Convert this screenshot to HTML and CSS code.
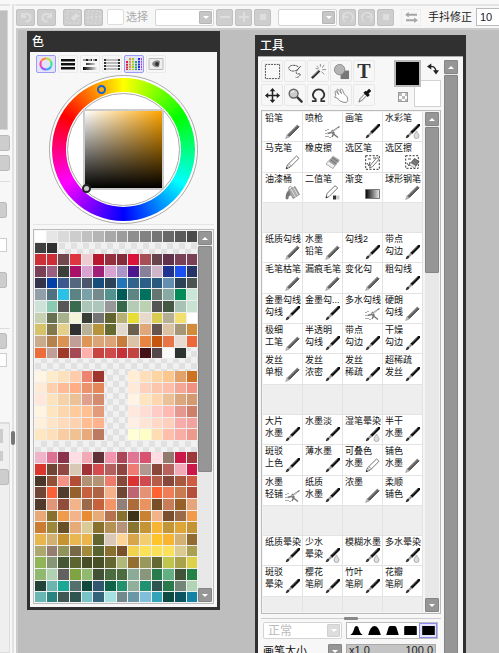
FILE: index.html
```html
<!DOCTYPE html>
<html lang="zh-CN">
<head>
<meta charset="utf-8">
<title>绘图</title>
<link rel="stylesheet" href="styles.css">
</head>
<body>
<svg class="defs" aria-hidden="true">
  <defs>
    <linearGradient id="fade"><stop offset="0" stop-color="#000"/><stop offset="1" stop-color="#eee"/></linearGradient>
    <linearGradient id="metal" x1="0" y1="0" x2="1" y2="1"><stop offset=".3" stop-color="#bbb"/><stop offset=".6" stop-color="#444"/></linearGradient>
    <symbol id="pencil" viewBox="0 0 15 15"><path d="M3 12L13.300 1.700" stroke="#666" stroke-width="3"/><path d="M2.800 10.600L12.600 .9" stroke="#aaa" stroke-width=".8"/><path d="M4.600 12.200L14.200 2.600" stroke="#333" stroke-width=".8"/><path d="M.6 14.500l1.400-3.700 2.300 2.300z" fill="#bbb" stroke="#888" stroke-width=".5"/></symbol>
    <symbol id="brush" viewBox="0 0 15 15"><path d="M6.500 8.500L14 1" stroke="#111" stroke-width="2.800" stroke-linecap="round"/><path d="M4 11l2.500-2.500" stroke="#999" stroke-width="2.400"/><path d="M.7 14.300c.3-2.600 1.400-3.600 2.700-3.800l1.200 1.200c-.6 1.500-2 2.500-3.900 2.600z" fill="#333"/><path d="M7.500 6.500l5-5" stroke="#777" stroke-width=".6"/></symbol>
    <symbol id="water" viewBox="0 0 15 15"><use href="#brush"/><path d="M11.500 7c1.200 2.300 2.500 3.300 2.500 5a2.500 2.600 0 0 1-5 0c0-1.700 1.400-2.700 2.500-5z" fill="#ddd" stroke="#999" stroke-width=".7"/></symbol>
    <symbol id="air" viewBox="0 0 15 15"><path d="M14.500 2.500L6 8.500l-3.500 1M6 8l7 5.500M7 6l2 3-2 4" fill="none" stroke="#777" stroke-width="1.500"/><path d="M7 8l6-4" stroke="#eee" stroke-width=".7"/><path d="M1 6v1M3 5v1M1 9v1M1 12v1M3 12v1M5 13v1" stroke="#555"/></symbol>
    <symbol id="marker" viewBox="0 0 15 15"><path d="M1.500 13.500l.8-3.500L11.500 1l2.500 2.300-9 9z" fill="#fff" stroke="#666" stroke-width=".9"/><path d="M2.300 10l2.700 2.300M3.800 8.500l2.700 2.500" stroke="#777" stroke-width=".8"/><path d="M.7 14.300l.6-2.500 1.700 1.700z" fill="#333"/></symbol>
    <symbol id="eraser" viewBox="0 0 15 15"><path d="M1 9l7-8 6.500 4L8 13.500z" fill="#999" stroke="#bbb" stroke-width=".7"/><path d="M1 9l2.500-3L10 10.500l-2 3z" fill="#eee" stroke="#999" stroke-width=".6"/><path d="M5 4.500L11.500 9M7 2.500L13.500 7" stroke="#777"/></symbol>
    <symbol id="selpen" viewBox="0 0 15 15"><path d="M.7.700h13.600v13.600H.7z" fill="none" stroke="#333" stroke-dasharray="2 1.500"/><path d="M2 8l2 3 1-4M3 4h3M8 3h3" stroke="#555" fill="none"/><path d="M4.500 13l1-3L12 2.500l2 1.700-6.500 7.500z" fill="#fff" stroke="#555" stroke-width=".8"/></symbol>
    <symbol id="seleraser" viewBox="0 0 15 15"><path d="M.7.700h12.600v12.600H.7z" fill="none" stroke="#333" stroke-dasharray="2 1.500"/><path d="M2 8l2 3 1-4M3 4h3" stroke="#555" fill="none"/><path d="M4.500 9.500l5-6 4.500 3-4.500 6.500z" fill="#777" stroke="#444" stroke-width=".8"/><path d="M4.500 9.500l1.200-1.500 5 3.200-1.200 1.800z" fill="#eee"/></symbol>
    <symbol id="bucket" viewBox="0 0 15 15"><path d="M4 5l6-3.500 4.500 8L8 13.500z" fill="#aaa" stroke="#777" stroke-width=".7"/><path d="M6 4l4.500 8M8.500 2.500l4.500 8" stroke="#ddd"/><path d="M4 5C3 1.500 6 0 7 3" fill="none" stroke="#888"/><path d="M4 5C1 7 .5 10 .7 14c1 .5 2 .4 2.600 0 .4-3 1-4 2.700-3.500z" fill="#777"/></symbol>
    <symbol id="binary" viewBox="0 0 15 15"><path d="M1 13l1-4.500L10 .7l2.700 2.300-8.500 8.500z" fill="#fff" stroke="#666" stroke-width=".9"/><path d="M.7 13.300l.5-2.300 1.600 1.500z" fill="#333"/><path d="M8 10.500h3v4H8z" fill="#333"/><path d="M11 10.500h3.500v4H11z" fill="#ccc"/></symbol>
    <symbol id="gradient" viewBox="0 0 15 15"><path d="M.5 4.500h14v9H.5z" fill="url(#fade)" stroke="#777"/></symbol>
    <symbol id="turn" viewBox="0 0 14 14"><path d="M3 3v4h4M3.500 6.500C5 3 11.500 3 11.500 7.500S7 11.500 6.500 11.500" fill="none" stroke="currentColor" stroke-width="2"/></symbol>
    <symbol id="spin" viewBox="0 0 14 14"><path d="M4 11.500A5 5 0 1 1 10 11.500M3 3v4h4" fill="none" stroke="currentColor" stroke-width="1.500"/></symbol>
    <symbol id="stop" viewBox="0 0 14 14"><path d="M4 4h6v6H4z" fill="currentColor"/></symbol>
  </defs>
</svg>
<div class="app">
  <aside class="side">
    <div class="navigator"></div>
    <div class="side-group first"><button class="stub"></button><button class="stub"></button></div>
    <div class="side-group second"><button class="stub"></button><input class="field" aria-label="数值"><button class="stub"></button></div>
    <div class="side-group third"><button class="stub"></button><input class="field" aria-label="数值"></div>
    <div class="side-list"><button class="mini"></button><button class="mini low"></button><button class="stub"></button></div>
  </aside>
  <div class="splitter"><span class="grip"></span></div>
  <main class="main">
    <div class="toolbar">
      <div class="set"><button class="tb large" disabled><svg><use href="#turn"/></svg></button><button class="tb large flip" disabled><svg><use href="#turn"/></svg></button></div>
      <div class="set"><button class="tb large" disabled><svg viewBox="0 0 14 14"><path d="M1 1h12v12H1z" fill="none" stroke="currentColor" stroke-dasharray="2 2"/><path d="M5 8l5-5 3 3-5 5z" fill="currentColor"/></svg></button><button class="tb large" disabled><svg viewBox="0 0 14 14"><path d="M1 1h12v12H1zM0 7h14M4 4h6v6H4z" fill="none" stroke="currentColor" stroke-dasharray="2 2"/></svg></button></div>
      <label class="check"><input type="checkbox" disabled><span>选择</span></label>
      <div class="set"><span class="combo top"><select disabled aria-label="缩放"></select><i></i></span><button class="tb" disabled><svg viewBox="0 0 14 14"><path d="M2 7h10" stroke="currentColor" stroke-width="2"/></svg></button><button class="tb" disabled><svg viewBox="0 0 14 14"><path d="M2 7h10M7 2v10" stroke="currentColor" stroke-width="2"/></svg></button><button class="tb" disabled><svg><use href="#stop"/></svg></button></div>
      <div class="set"><span class="combo top"><select disabled aria-label="旋转"></select><i></i></span><button class="tb" disabled><svg><use href="#spin"/></svg></button><button class="tb flip" disabled><svg><use href="#spin"/></svg></button><button class="tb" disabled><svg><use href="#stop"/></svg></button></div>
      <button class="mirror" disabled><svg viewBox="0 0 14 12"><path d="M13 3H3M1 9h10" stroke="#a5a5a5" stroke-width="2"/><path d="M4 0v6L0 3zM10 6v6l4-3z" fill="#a5a5a5"/></svg></button>
      <label class="stabilizer"><span>手抖修正</span><input value="10"></label>
    </div>
    <div class="canvas"></div>
  </main>

  <section class="window color-window">
    <h2>色</h2>
    <div class="body">
      <div class="modes">
        <button class="mode on"><svg viewBox="0 0 16 14"><g fill="none" stroke-width="2"><path d="M8 1.500A5.500 5.500 0 0 1 12.800 4.200" stroke="#bd4"/><path d="M12.800 4.200a5.500 5.500 0 0 1 0 5.500" stroke="#3e8"/><path d="M12.800 9.700A5.500 5.500 0 0 1 8 12.500" stroke="#3ae"/><path d="M8 12.500A5.500 5.500 0 0 1 3.200 9.700" stroke="#95f"/><path d="M3.200 9.700a5.500 5.500 0 0 1 0-5.500" stroke="#f4a"/><path d="M3.200 4.200A5.500 5.500 0 0 1 8 1.500" stroke="#f84"/></g></svg></button>
        <button class="mode"><svg viewBox="0 0 16 14"><path d="M1 2h14v2H1zM1 6h14v2H1zM1 10h14v2H1z" fill="#111"/><path d="M1 4h14v1H1zM1 8h14v1H1zM1 12h14v1H1z" fill="#888"/></svg></button>
        <button class="mode"><svg viewBox="0 0 16 14"><path d="M1 2h4v2H1zM6 2h4v2H6zM11 2h4v2h-4z" fill="#999"/><path d="M4 2h2v2H4zM9 2h1v2H9zM13 2h2v2h-2z" fill="#222"/><path d="M4 6h9v2H4zM1 10h14v3H1z" fill="url(#fade)"/></svg></button>
        <button class="mode"><svg viewBox="0 0 16 14"><path d="M1 2h14v2H1zM1 5h14v2H1zM1 8h14v2H1zM1 11h14v2H1z" fill="#bbb"/><path d="M0 2h2v2H0zM14 2h2v2h-2zM0 5h2v2H0zM14 5h2v2h-2zM0 8h2v2H0zM14 8h2v2h-2zM0 11h2v2H0zM14 11h2v2h-2z" fill="#333"/></svg></button>
        <button class="mode on"><svg viewBox="0 0 16 14"><g stroke-width="2" stroke-dasharray="2 .7"><path d="M1 4v9" stroke="#d23"/><path d="M4 1v12" stroke="#d92"/><path d="M7 1v12" stroke="#ac2"/><path d="M10 4v9" stroke="#2a6"/><path d="M13 1v12" stroke="#23c"/><path d="M15.500 1v12" stroke="#b3d" stroke-width="1"/></g></svg></button>
        <button class="mode"><svg viewBox="0 0 16 14"><path d="M1 1.500h14v11H1z" fill="#eee" stroke="#bbb"/><path d="M5 5q3-3 7-1l-1 6q-5 1-7-3z" fill="#888"/><circle cx="9" cy="7" r="2" fill="#333"/></svg></button>
      </div>
      <div class="wheel"><div class="ring"></div><div class="hole"></div><div class="shade"></div><span class="hue-mark"></span><span class="shade-mark"></span></div>
      <div class="swatch-box">
        <div class="swatches" id="swatches"></div>
        <div class="scroll"><button class="arrow up" aria-label="上"></button><span class="thumb"></span><button class="arrow down" aria-label="下"></button></div>
      </div>
    </div>
  </section>

  <section class="window tool-window">
    <h2>工具</h2>
    <div class="body columns">
      <div class="content">
        <div class="top">
          <div class="tools">
            <button><svg viewBox="0 0 18 18"><path d="M1.500 1.500h15v15h-15z" fill="none" stroke="#444" stroke-dasharray="2 1"/></svg></button>
            <button><svg viewBox="0 0 18 18"><path d="M12 4C8 1 1 2.500 2 6s7 3 9 1 5-5 3-3-5 5-4 7 4-1 4 1-3 4-5 3" fill="none" stroke="#444" stroke-dasharray="2.500 .7"/></svg></button>
            <button><svg viewBox="0 0 18 18"><path d="M2 16l8-8" stroke="#333" stroke-width="2.600"/><path d="M3 14l7-7" stroke="#aaa" stroke-width=".7"/><path d="M11 1v3M15 2l-2 3M7 3l2 2M13 7h4M12 9l3 3M6 6h3" stroke="#888"/></svg></button>
            <button><svg viewBox="0 0 18 18"><path d="M8 8h9v9H8z" fill="#777"/><circle cx="7" cy="7" r="5.500" fill="#b5b5b5" stroke="#888"/></svg></button>
            <button class="type">T</button>
            <button><svg viewBox="0 0 18 18"><path d="M9 3v12M3 9h12" stroke="#222" stroke-width="1.600"/><path d="M9 1l3 3.500H6zM9 17l3-3.500H6zM1 9l3.500-3v6zM17 9l-3.500-3v6z" fill="#222"/></svg></button>
            <button><svg viewBox="0 0 18 18"><path d="M10.500 10.500l5 5" stroke="#333" stroke-width="2.500" stroke-linecap="round"/><circle cx="7" cy="7" r="4.700" fill="#ccc" stroke="#666" stroke-width="1.500"/><path d="M4.500 6.500q1-2 3-2" fill="none" stroke="#fff"/></svg></button>
            <button><svg viewBox="0 0 18 18"><path d="M2 15h4v-2C3 11 2.500 8 4 5.500c2.500-4 8-4 10.300 0C16 8 15 11 12 13v2h4" fill="none" stroke="#333" stroke-width="2"/></svg></button>
            <button><svg viewBox="0 0 18 18"><path d="M3 9L2 5q1-1.500 2 .5L6 8 4 3q1-1.500 2.300.5L9 7 7.500 2.500q1.500-1.200 2.500.7l2 4.300 3 3q2 4-1 6l-3.500-.5Q6 15 5 12l-3-1q-.5-1.500 1-2z" fill="#fff" stroke="#888"/></svg></button>
            <button><svg viewBox="0 0 18 18"><path d="M3 16l1.500-4 5-5 2 2-5 5z" fill="#eee" stroke="#777"/><path d="M9 5l4.500 4.500M11 7l4-4" stroke="#111" stroke-width="3.200"/></svg></button>
          </div>
          <div class="colors">
            <button class="fore" aria-label="前景色"></button>
            <button class="swap" aria-label="交换"><svg viewBox="0 0 14 13"><path d="M3 3.500q7-1 7.500 6" fill="none" stroke="#222" stroke-width="1.600"/><path d="M0 3.500L5 0v7zM7 8h7l-3.500 5z" fill="#222"/></svg></button>
            <button class="clear" aria-label="透明色"></button>
            <button class="back" aria-label="背景色"></button>
          </div>
        </div>
        <div class="brush-box">
          <div class="brushes" id="brushes"></div>
          <div class="scroll"><button class="arrow up" aria-label="上"></button><span class="thumb"></span><button class="arrow down" aria-label="下"></button></div>
        </div>
        <div class="divider"><span></span></div>
        <div class="row">
          <span class="combo blend"><select disabled aria-label="混合模式"><option>正常</option></select><i></i></span>
          <div class="tips">
            <button><svg viewBox="0 0 14 10"><path d="M0 10q3-1 5-8.500Q7-1.500 9 1.500 11 9 14 10z"/></svg></button>
            <button><svg viewBox="0 0 14 10"><path d="M0 10Q2.500 0 7 0t7 10z"/></svg></button>
            <button><svg viewBox="0 0 14 10"><path d="M0 10L2.500 2q.5-2 2-2h5q1.500 0 2 2L14 10z"/></svg></button>
            <button><svg viewBox="0 0 14 10"><path d="M0 10V1q0-1 1-1h12q1 0 1 1v9z"/></svg></button>
            <button class="on"><svg viewBox="0 0 14 10"><path d="M0 0h14v10H0z"/></svg></button>
          </div>
        </div>
        <div class="row size">
          <span class="size-name">画笔大小</span><button class="arrow down" aria-label="展开"></button>
          <div class="amount"><span>x1.0</span><span>100.0</span></div>
        </div>
      </div>
      <div class="scroll outer"><button class="arrow up" aria-label="上"></button><span class="thumb"></span></div>
    </div>
  </section>
</div>
<script src="app.js"></script>
</body>
</html>
```
FILE: app.js
```js
// One line per palette row; "-" is an unused slot.
const palette = `
fff e6e6e6 dadada cdcdcd c1c1c1 b5b5b5 a8a8a8 9c9c9c 8e8e8e 828282 757575 686868 5a5a5a 4b4b4b
404040 303030 - - - - - - - - - - - -
ce3038 ce2c36 72484e de3640 eccdd2 b8182e 95303f 852b3c db123a a65055 66444d 61304a 7a4056 7a4056
7a4056 9a6080 3c3f38 a91169 d8a3d0 a01f77 d8a3d0 ab95c8 4c188e 88809a cfb4ca 20328f 1b50ef 243566
34344a 0040a8 3c5990 53677e 4b566c 174d7b 2d4358 2275b8 31648c 2a6088 285a80 6390b0 2b4257 4c5453
929fa8 50717f 2bc0e5 5c8384 7aa0a8 758a8d 549290 005a58 5c8584 00705f 64766f 87aaa2 008b59 cae6d8
cfe2d9 8bcab2 575757 3a6a50 abc5b8 adc6bb 98979a 36684a b5cbb6 bad2b2 555 445843 a8c3b5 c9e3d2
c7d0b3 687052 a7b18b f4f4db 383e36 747474 626430 b6b075 e7dd34 e7dacd d8cd51 b4ae92 f2df6e fff
d6c369 81794d e4d088 303030 b8b097 b5943b 656a30 e2d8cb 6b604c e1a679 66554f dbc2a3 a69678 d18b39
c8ac8b b5824d da9353 bf9f98 dd9655 daa577 dca477 c77c3e dcc3a7 ea8541 c5560d e87548 eadbd2 ed6838
ec6c3b bf9f97 9f3928 a54853 ffb0aa c94440 cf4a4b c63039 c34541 441015 55464a f9f9f9 2d332e -
- - - - - - - - - - - - - -
fff5e5 fdebca fce1bd ffccac ec8471 a03530 - - ffedd4 ffdfb9 fdd5a3 fcc68f e3a269 cf721f
ffead5 ffd0ae ffbb94 ffad84 ec936d e38758 - - ffead8 ffd0bb fcc6ad ffbea9 f5a797 f19181
ffe7dc fce3b9 f5d2a7 ebc297 dfa18e d58b6d - - fff3e3 ffe5bf ffd6ad ebc097 dba77c d59a70
fff4df ffe5bd fed6ac ffca9c ffbf91 e29b7b - - ffe9df ffdcd4 ffcbc5 ffb9b0 e5988f cf806a
fff0dc ffe4c6 ffdabb fed2af ffbd91 ffb28b - - ffeee4 fee4d5 ffd8c6 ffcfbe f8aca9 f2a39e
ffe7c1 fddfba f9cda1 f0c292 e6aa7c bc7a61 - - fffed7 ffffc5 ffddb2 ffbea9 f8ada7 ed9a8d
- - - - - - - - - - - - - -
efb4ca de7193 8b334b ffdde5 f2aab7 603238 f394ae ac4759 e07594 d9526f ffdbe4 91796e ca1949 9e3739
d9372e 6f4635 914844 d9c8b4 a03238 d34c4e b3605f 8f4640 ee7c73 b19891 894839 b7625f f4a9b6 cc1848
493829 935038 f59286 b44d36 b29274 b29474 ed7b6b 88483a da3432 cf4b50 b55d49 87483b aa5941 cf5b42
704535 fc6039 513b2d 96602d c6613f ae6344 f5b28a 704734 bd6571 e49273 ff6332 ef7e57 c87c50 b54e3b
503a2c e3957a 914d39 f3b489 9b6a4b c7613c f49469 928078 ac6d3b ea935e 785028 c77e58 976028 e7a67a
e9a976 88702d f19a4c f4b48a e88b33 e7ab78 b6714f 86712e 3e3219 c98132 f3b38a 794f2d 9b6b47 f29a49
c97c32 9c883a 685029 e7ab78 d9ca97 89702d b59154 b69378 88752f c59533 f8b535 c29637 dda637 c49333
e8b64e d2b170 c59431 e9b64f eab64c 606630 dac9b8 ffd495 d9a54b f2ce70 ffc32b f9b530 d1b273 916b32
ada86f 957d72 91945a 776847 a28a3a 596331 8a702f 795028 f2d34e fae157 fae058 fbe05a dbcb91 a9a052
91b556 869676 455635 5c652f 484e28 475027 646732 b0b87a 936e31 97985a 646834 bec54d a9a24b ddd149
90b96f b1d2b2 63615f 80a342 92b970 435136 4c6b3e 4c6b3e 8baa98 88967a 287b4b 64ae83 425438 258247
234237 6ab5af 1ca896 536f6e 10483b 31566f 106348 24916e 90b09b 209271 2d5353 29794a 738679 b1d4b4
6ab6b2 298480 415754 2f5551 78c2c8 32657b a7e0e1 71898c 6997a6 80bfda 34a2b7 0d4a42 0c5362 1483a5`;

const swatches = document.getElementById("swatches");
for (const name of palette.trim().split(/\s+/)) {
  const cell = document.createElement("button");
  cell.className = "swatch";
  if (name === "-") cell.classList.add("unused");
  else cell.style.backgroundColor = "#" + name;
  cell.setAttribute("aria-label", name);
  swatches.append(cell);
}

const rows = [
  "铅笔:pencil,喷枪:air,画笔:brush,水彩笔:water",
  "马克笔:marker,橡皮擦:eraser,选区笔:selpen,选区擦:seleraser",
  "油漆桶:bucket,二值笔:binary,渐变:gradient,球形钢笔:pencil",
  ",,,",
  "纸质勾线:pencil,水墨/铅笔:pencil,勾线2:brush,带点/勾边:brush",
  "毛笔枯笔:pencil,漏痕毛笔:pencil,变化勾:pencil,粗勾线:brush",
  "金墨勾线/勾线:brush,金墨勾...:brush,多水勾线:air,硬朗/勾线:pencil",
  "极细/工笔:pencil,半透明/勾线:brush,带点/勾边:brush,干燥/勾边:brush",
  "发丝/单根:pencil,发丝/浓密:brush,发丝/稀疏:brush,超稀疏/发丝:brush",
  ",,,",
  "大片/水墨:brush,水墨淡:brush,湿笔晕染:water,半干/水墨:brush",
  "斑驳/上色:brush,薄水墨:brush,可叠色/水墨:marker,铺色/水墨:pencil",
  "水墨/轻铺:air,纸质/水墨:brush,浓墨:pencil,柔顺/铺色:brush",
  ",,,",
  "纸质晕染:brush,少水/晕染:water,模糊水墨:water,多水晕染:water",
  "斑驳/晕染:brush,樱花/笔刷:brush,竹叶/笔刷:brush,花瓣/笔刷:brush",
  ",,,"
];

const brushes = document.getElementById("brushes");
for (const entry of rows.join(",").split(",")) {
  const [label, icon] = entry.split(":");
  if (!icon) {
    const slot = document.createElement("div");
    slot.className = "slot";
    brushes.append(slot);
    continue;
  }
  const button = document.createElement("button");
  button.className = "brush";
  button.innerHTML = `<span>${label.replace("/", "<br>")}</span><svg><use href="#${icon}"/></svg>`;
  brushes.append(button);
}
```
FILE: styles.css
```css
* { box-sizing: border-box; }
body { margin: 0; font: 12px/16px "Liberation Sans", "Noto Sans CJK SC", sans-serif; color: #222; background: #f7f7f7; }
button, input, select { font: inherit; color: inherit; margin: 0; padding: 0; border: 0; border-radius: 0; }
button { display: block; background: none; }
svg { display: block; }
.defs { position: absolute; width: 0; height: 0; }

.app { position: relative; display: flex; height: 100vh; overflow: hidden; border-top: 4px solid #f8f8f8; box-shadow: inset 0 2px #e4e4e4; }

.side { flex: none; width: 10px; padding-top: 6px; display: flex; flex-direction: column; }
.navigator { height: 120px; background: #bebebe; border: 1px solid #d6d6d6; border-left: 0; margin-right: 2px; }
.side-group { display: flex; flex-direction: column; border-bottom: 1px solid #ddd; }
.first { gap: 4px; padding: 5px 0 10px; }
.second { gap: 20px; padding: 20px 3px 40px 0; }
.third { gap: 4px; padding: 4px 3px 55px 0; }
.stub { height: 16px; background: #cdcdcd; border: 1px solid #bababa; border-left: 0; border-radius: 0 3px 3px 0; }
.field { width: 100%; height: 14px; background: #fff; border: 1px solid #ccc; border-left: 0; }
.side-list { flex: 1; display: flex; flex-direction: column; gap: 8px; padding-top: 5px; background: #efefef; border: 1px solid #ddd; border-left: 0; }
.mini { width: 3px; height: 14px; background: #ccc; }
.low { height: 10px; }
.splitter { flex: none; width: 5px; padding-top: 427px; background: #f7f7f7; border-left: 2px solid #f7f7f7; border-right: 1px solid #f7f7f7; box-shadow: inset 2px 0 #e2e2e2; }
.grip { display: block; width: 4px; height: 14px; margin-left: -1px; border-radius: 2px; background: #777; }

.main { flex: 1; min-width: 0; display: flex; flex-direction: column; }
.toolbar { flex: none; display: flex; align-items: center; gap: 7px; height: 24px; padding: 2px 0 0 1px; overflow: hidden; white-space: nowrap; }
.canvas { flex: 1; background: #bebebe; border: solid #ccc; border-width: 2px 0 0 2px; margin-left: 1px; }
.set { display: flex; gap: 2px; }
.tb { flex: none; display: grid; place-items: center; width: 17px; height: 17px; background: #cecece; border: 1px solid #c1c1c1; border-radius: 2px; color: #dedede; }
.tb svg { width: 14px; height: 14px; }
.large { width: 19px; }
.flip svg { transform: scaleX(-1); }
.check { display: flex; align-items: center; gap: 2px; margin-left: -3px; font-size: 11px; color: #aaa; }
.check input { appearance: none; width: 17px; height: 16px; background: #fff; border: 1px solid #ddd; border-radius: 2px; }
.combo { flex: none; display: flex; align-items: center; justify-content: space-between; height: 17px; padding-right: 1px; background: #fff; border: 1px solid #d4d4d4; border-radius: 2px; }
.combo select { flex: 1; min-width: 0; appearance: none; background: none; color: #bbb; opacity: 1; }
.combo i { width: 13px; height: 13px; display: grid; place-items: center; background: #c6c6c6; border: 1px solid #b5b5b5; border-radius: 1px; }
.combo i::after { content: ""; border: 3px solid transparent; border-top-color: #fff; border-bottom: 0; }
.top.combo { width: 59px; }
.mirror { flex: none; width: 20px; height: 17px; display: grid; place-items: center; border: 1px solid #eee; }
.mirror svg { width: 13px; height: 11px; }
.stabilizer { display: flex; align-items: center; gap: 4px; font-size: 11px; }
.stabilizer input { width: 60px; height: 18px; padding-left: 3px; background: #fff; border: 1px solid #bbb; color: #223; }

.window { position: absolute; background: #303030; padding: 0 3px 3px; }
.window h2 { margin: 0; height: 21px; padding-left: 2px; color: #fff; font-size: 12px; line-height: 22px; font-weight: 500; }
.body { background: #f7f7f7; padding: 3px; }
.color-window { left: 27px; top: 27px; width: 193px; }
.tool-window { left: 255px; top: 31px; width: 211px; }
.tool-window .body { border-top: 1px solid #aaa; }

.modes { display: flex; gap: 2px; padding-left: 3px; }
.mode { width: 20px; height: 18px; display: grid; place-items: center; border: 1px solid #eaeaea; border-radius: 2px; }
.mode svg { width: 16px; height: 14px; }
.mode.on { background: #e3e3fb; border-color: #9c9cf4; }
.wheel { position: relative; display: grid; place-items: center; width: 149px; height: 149px; margin: 2px auto; border: 1px solid #aaa; border-radius: 50%; background: #fff; }
.wheel > div { grid-area: 1 / 1; }
.ring { width: 143px; height: 143px; border-radius: 50%; background: conic-gradient(#ff0, #0f0 60deg, #0ff 120deg, #00f 180deg, #f0f 240deg, #f00 300deg, #ff0); }
.hole { width: 113px; height: 113px; border-radius: 50%; background: #fff; border: 1px solid #aaa; box-shadow: 0 0 0 1px #fff; }
.shade { width: 81px; height: 81px; border: 2px solid #ccc; background: linear-gradient(to top, #000, transparent), linear-gradient(to right, #fff, #ffa500); background-origin: content-box; }
.hue-mark, .shade-mark { position: absolute; width: 9px; height: 9px; border-radius: 50%; border: 2px solid #1660d8; }
.hue-mark { left: 47px; top: 9px; }
.shade-mark { left: 32px; top: 108px; border-color: #222; background: #ccc; }

.swatch-box { display: flex; height: 375px; margin-top: 5px; padding: 1px; border: 1px solid #bbb; background: #f4f4f4; box-shadow: 0 -4px #f7f7f7, 0 -5px #e4e4e4; }
.swatches { flex: 1; display: grid; grid-template-columns: repeat(14, 1fr); align-content: start; overflow: hidden; background: repeating-conic-gradient(#f1f1f1 0 25%, #e1e1e1 0 50%) 0 0 / 12px 12px; }
.swatch { aspect-ratio: 1; border: solid #eee; border-width: 0 1px 1px 0; }
.unused { border: 0; }
.scroll { flex: none; width: 14px; display: flex; flex-direction: column; gap: 1px; background: #e8e8e8; }
.arrow { flex: none; width: 14px; height: 14px; display: grid; place-items: center; background: #969696; border: 1px solid #858585; border-radius: 1px; }
.arrow::after { content: ""; border: 3px solid transparent; }
.up::after { border-bottom-color: #fff; border-top: 0; }
.down::after { border-top-color: #fff; border-bottom: 0; }
.scroll .down { margin-top: auto; }
.thumb { height: 226px; background: #969696; border: 1px solid #858585; border-radius: 1px; }

.columns { display: flex; gap: 3px; padding-right: 5px; }
.content { flex: 1; min-width: 0; }
.outer .thumb { flex: 1; }
.top { display: flex; justify-content: space-between; }
.tools { display: grid; grid-template-columns: repeat(5, 22px); gap: 1px; }
.tools button { height: 22px; display: grid; place-items: center; border: 1px solid #e8e8e8; border-radius: 2px; }
.tools svg { width: 17px; height: 17px; }
.tools .type { font: bold 20px/20px "Liberation Serif", serif; color: #333; }
.colors { display: grid; grid-template: 27px 20px / 20px 7px 20px; }
.fore { grid-area: 1 / 1 / 2 / 3; background: #000; border: 2px solid #bbb; }
.back { grid-area: 1 / 2 / 3 / 4; margin-top: 20px; background: #fff; border: 1px solid #d2d2d2; }
.fore { z-index: 1; }
.swap { grid-area: 1 / 3; justify-self: end; align-self: start; margin: 3px 2px; z-index: 1; }
.swap svg { width: 12px; height: 12px; }
.clear { grid-area: 2 / 1; width: 10px; height: 10px; margin: 5px 4px; border: 1px solid #999; background: repeating-conic-gradient(#fff 0 25%, #bbb 0 50%) 0 0 / 6px 6px; }

.brush-box { display: flex; gap: 2px; height: 504px; margin-top: 3px; padding: 1px; border: 1px solid #bbb; background: #f4f4f4; }
.brushes { flex: 1; display: grid; grid-template-columns: repeat(4, minmax(0, 1fr)); align-content: start; overflow: hidden; }
.brush, .slot { position: relative; aspect-ratio: 33 / 25; border: solid #e3e3e3; border-width: 0 1px 1px 0; }
.slot { background: #eee; }
.brush { display: flex; align-items: flex-start; padding: 0 0 0 2px; background: #fff; color: #111; text-align: left; font-size: 9px; line-height: 12px; white-space: nowrap; }
.brush svg { position: absolute; right: 2px; bottom: 2px; width: 15px; height: 15px; }
.brush-box .thumb { height: 146px; }

.divider { display: flex; justify-content: center; align-items: center; height: 8px; background: linear-gradient(#ccc, #ccc) center / 100% 1px no-repeat; }
.divider span { width: 14px; height: 3px; border-radius: 1px; background: #888; }
.row { display: grid; grid-template-columns: 79px 92px; gap: 4px; padding-left: 2px; }
.blend select { padding-left: 4px; }
.blend i { background: #ddd; border-color: #d0d0d0; }
.tips { display: grid; grid-template-columns: repeat(5, 1fr); background: #fff; border: 1px solid #bbb; }
.tips button { display: grid; place-items: center; border: 1px solid transparent; }
.tips .on { border-color: #8c8cf0; background: #e3e3fb; }
.tips svg { width: 13px; height: 9px; }
.size { grid-template-columns: 64px 14px 93px; gap: 1px; padding-top: 5px; }
.size-name { line-height: 14px; font-size: 11px; color: #111; }
.amount { display: flex; justify-content: space-between; height: 14px; margin-left: 3px; padding: 0 2px; background: #c4c4c4; border: 1px solid #aaa; font-size: 11px; line-height: 11px; }
```
